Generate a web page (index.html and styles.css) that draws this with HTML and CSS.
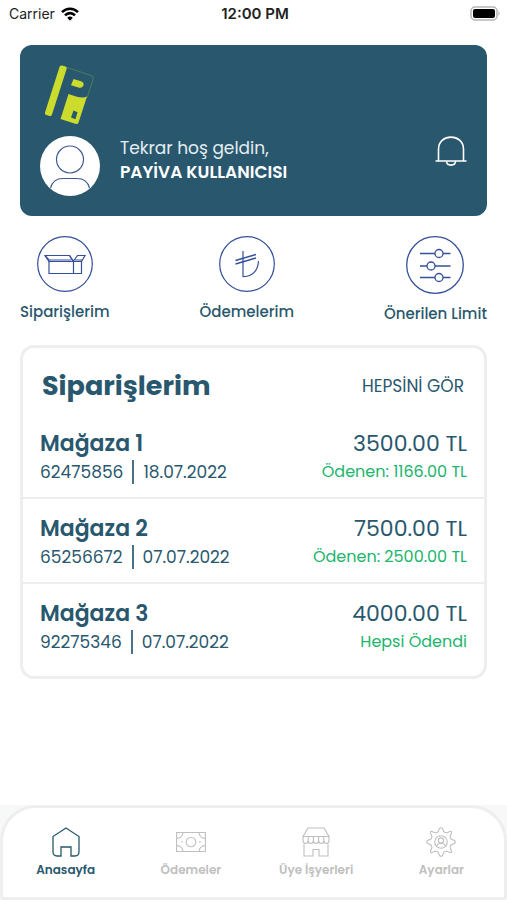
FILE: index.html
```html
<!DOCTYPE html>
<html lang="tr">
<head>
    <meta charset="UTF-8">
    <meta name="viewport" content="width=device-width, initial-scale=1.0">
    <title>Payiva</title>
    <link rel="stylesheet" href="styles.css">
</head>
<body>
    <div class="status-bar">
        <div class="carrier">
            <span>Carrier</span>
            <svg width="18" height="14" viewBox="0 0 18 14" fill="none" stroke="#000" stroke-width="2.6">
                <path d="M1 5.2C5.5 0.6 12.5 0.6 17 5.2"/>
                <path d="M4 8.3C6.8 5.4 11.2 5.4 14 8.3"/>
                <path d="M9 13.7L6.2 10.8Q9 8.3 11.8 10.8Z" fill="#000" stroke="none"/>
            </svg>
        </div>
        <div class="clock">12:00 PM</div>
        <svg class="battery" width="31" height="15" viewBox="0 0 31 15">
            <rect x="1" y="1" width="26" height="13" rx="4" fill="#fff" stroke="#b5b5b5" stroke-width="1.5"/>
            <rect x="3" y="3" width="22" height="9" rx="2" fill="#000"/>
            <path d="M28.5 5Q31 7.5 28.5 10Z" fill="#b5b5b5"/>
        </svg>
    </div>

    <main>
        <section class="welcome">
            <svg class="logo" width="50" height="60" viewBox="0 0 50 60">
                <path d="M17 .5L20.5 1.5Q22.3 2.2 21.6 4L7 49.5Q6.3 51.5 4.500 51L1.2 50Q-.6 49.3 0 47.5L14.5 2Q15.2 0 17 .5Z" fill="#cbdc2c"/>
                <path d="M22 2.5L46 10.5Q49 11.5 48.2 14L42 33" fill="none" stroke="#4c7c58" stroke-width="1"/>
                <path d="M28.5 14L36 16.2Q39.5 17.5 38.4 20.5Q37 23.5 33.5 22.5L26 20.2Z" fill="#cbdc2c"/>
                <path fill-rule="evenodd" d="M23.5 29L31 31.5Q38 33.5 42 31.5L33.5 57.5Q32.8 59.4 31 59L15.5 54ZM28.5 45.5L26 52.5L30.5 54.2L32.5 47.2Z" fill="#cbdc2c"/>
            </svg>
            <div class="profile">
                <svg class="avatar" width="60" height="60" viewBox="0 0 60 60">
                    <circle cx="30" cy="30" r="30" fill="#fff"/>
                    <g fill="none" stroke="#3e5a94" stroke-width="1.2">
                        <circle cx="30" cy="23.5" r="13.5"/>
                        <path d="M10.5 52Q13 42.5 23 42.5H37Q47 42.5 49.5 52"/>
                    </g>
                </svg>
                <div class="greeting">
                    <p>Tekrar hoş geldin,</p>
                    <p class="user-name">PAYİVA KULLANICISI</p>
                </div>
                <button class="bell" aria-label="Bildirimler">
                    <svg width="32" height="30" viewBox="0 0 32 30" fill="none" stroke="#fff" stroke-width="1.6">
                        <path d="M3.5 25V13.5C3.5 -3 28.5 -3 28.5 13.5V25"/>
                        <path d="M.5 25H31.5M11.5 25C11.5 30.5 20.5 30.5 20.5 25"/>
                    </svg>
                </button>
            </div>
        </section>

        <section class="actions">
            <a href="#siparislerim" class="action">
                <svg width="56" height="56" viewBox="0 0 56 56" fill="none" stroke="#34509a" stroke-width="1.2">
                    <circle cx="28" cy="28" r="27.3"/>
                    <path d="M12 24.5V37.5H44.5V24.5M36.5 25V37.5"/>
                    <path d="M8 19.5H32.5L36.5 25L40.5 19.5H48L44.5 25.5H12Z"/>
                    <path d="M12 24L8 19.5M32.5 19.5L36 25.5M12 24H34M38 24H45"/>
                </svg>
                <span>Siparişlerim</span>
            </a>
            <a href="#odemelerim" class="action">
                <svg width="56" height="56" viewBox="0 0 56 56" fill="none" stroke="#34509a" stroke-width="1.2">
                    <circle cx="28" cy="28" r="27.3"/>
                    <path d="M24 15V40.5C33 41 39 35 39.5 25"/>
                    <path d="M16.5 24.5L37 18.5M16.5 28L37 22" stroke-width="1.5"/>
                </svg>
                <span>Ödemelerim</span>
            </a>
            <a href="#limit" class="action">
                <svg width="58" height="58" viewBox="0 0 58 58" fill="none" stroke="#34509a" stroke-width="1.3">
                    <circle cx="29" cy="29" r="28.3"/>
                    <path d="M14 17.5H44.5M14 30H44.5M14 41.5H44.5"/>
                    <circle cx="33" cy="17.5" r="4" fill="#fff"/>
                    <circle cx="25" cy="30" r="4" fill="#fff"/>
                    <circle cx="33" cy="41.5" r="4" fill="#fff"/>
                </svg>
                <span>Önerilen Limit</span>
            </a>
        </section>

        <section class="orders" id="siparislerim">
            <div class="orders-header">
                <h1>Siparişlerim</h1>
                <a href="#hepsi">HEPSİNİ GÖR</a>
            </div>
            <div class="order">
                <div class="line">
                    <h2>Mağaza 1</h2>
                    <span class="amount">3500.00 TL</span>
                </div>
                <div class="line">
                    <span class="meta"><span>62475856</span><span>18.07.2022</span></span>
                    <span class="paid">Ödenen: 1166.00 TL</span>
                </div>
            </div>
            <div class="order">
                <div class="line">
                    <h2>Mağaza 2</h2>
                    <span class="amount">7500.00 TL</span>
                </div>
                <div class="line">
                    <span class="meta"><span>65256672</span><span>07.07.2022</span></span>
                    <span class="paid">Ödenen: 2500.00 TL</span>
                </div>
            </div>
            <div class="order">
                <div class="line">
                    <h2>Mağaza 3</h2>
                    <span class="amount">4000.00 TL</span>
                </div>
                <div class="line">
                    <span class="meta"><span>92275346</span><span>07.07.2022</span></span>
                    <span class="paid">Hepsi Ödendi</span>
                </div>
            </div>
        </section>
    </main>

    <div class="tab-area">
        <nav class="tabs">
            <a href="#anasayfa" class="active">
                <svg width="30" height="30" viewBox="0 0 30 30" fill="none" stroke="currentColor" stroke-width="1.3">
                    <path d="M15 1L28 9.5V24.5Q28 29 24 29H20V20H10V29H6Q2 29 2 24.5V9.5Z"/>
                </svg>
                <span>Anasayfa</span>
            </a>
            <a href="#odemeler">
                <svg width="30" height="30" viewBox="0 0 30 30" fill="none" stroke="currentColor" stroke-width="1.1">
                    <path d="M.6 5.5H29.4V24.5H.6Z"/>
                    <circle cx="15" cy="15" r="4.8"/>
                    <path d="M7 5.5Q6.5 11 .6 11.5M23 5.5Q23.5 11 29.4 11.5M7 24.5Q6.5 19 .6 18.5M23 24.5Q23.5 19 29.4 18.5M5 15H7M23 15H25"/>
                </svg>
                <span>Ödemeler</span>
            </a>
            <a href="#isyerleri">
                <svg width="30" height="30" viewBox="0 0 30 30" fill="none" stroke="currentColor" stroke-width="1.1">
                    <path d="M7 1H23L28 9.5H2Z"/>
                    <path d="M2 9.5V13.5C2 17.5 7.2 17.5 7.2 13.5V9.5M7.2 13.5C7.2 17.5 12.4 17.5 12.4 13.5V9.5M12.4 13.5C12.4 17.5 17.6 17.5 17.6 13.5V9.5M17.6 13.5C17.6 17.5 22.8 17.5 22.8 13.5V9.5M22.8 13.5C22.8 17.5 28 17.5 28 13.5V9.5"/>
                    <path d="M3 17V29H12V22.5H18V29H27V17"/>
                </svg>
                <span>Üye İşyerleri</span>
            </a>
            <a href="#ayarlar">
                <svg width="30" height="30" viewBox="0 0 30 30" fill="none" stroke="currentColor" stroke-width="1.1">
                    <path d="M13.5 1.5Q15 0 16.5 1.5L18 5L20.5 6L24 4.5Q26 4 25.5 6L24 9.5L25 12L28.5 13.5Q30 15 28.5 16.5L25 18L24 20.5L25.5 24Q26 26 24 25.5L20.5 24L18 25L16.5 28.5Q15 30 13.5 28.5L12 25L9.5 24L6 25.5Q4 26 4.5 24L6 20.5L5 18L1.5 16.5Q0 15 1.5 13.5L5 12L6 9.5L4.5 6Q4 4 6 4.5L9.5 6L12 5Z"/>
                    <circle cx="15" cy="15" r="6.3"/>
                    <circle cx="15" cy="13.5" r="2.6"/>
                    <path d="M10.5 19Q11 17 13.5 16.5H16.5Q19 17 19.5 19"/>
                </svg>
                <span>Ayarlar</span>
            </a>
        </nav>
    </div>
</body>
</html>
```
FILE: styles.css
```css
* {
    margin: 0;
    padding: 0;
    box-sizing: border-box;
}
body {
    display: flex;
    flex-direction: column;
    min-height: 100vh;
    background: #fff;
    color: #29586e;
    font-family: Poppins, Inter, sans-serif;
}
a {
    color: inherit;
    text-decoration: none;
}
svg {
    display: block;
    flex-shrink: 0;
}

/* Status bar */
.status-bar {
    display: grid;
    grid-template-columns: 1fr auto 1fr;
    align-items: center;
    height: 27px;
    padding: 0 6px 0 9px;
    color: #222;
    font-family: Inter, sans-serif;
    font-size: 14px;
}
.carrier {
    display: flex;
    align-items: center;
    gap: 6px;
}
.clock {
    font-size: 15px;
    font-weight: 600;
}
.battery {
    justify-self: end;
}

main {
    padding: 18px 20px 20px;
}

/* Welcome card */
.welcome {
    padding: 20px;
    border-radius: 12px;
    background: #29586e;
    color: #fff;
}
.logo {
    margin-left: 5px;
}
.profile {
    display: flex;
    align-items: center;
    margin-top: 11px;
}
.greeting {
    flex: 1;
    margin-left: 20px;
    font-size: 17px;
    line-height: 24px;
    padding-bottom: 12px;
}
.greeting p {
    color: #e4edf2;
}
.greeting .user-name {
    color: #fff;
    font-weight: 600;
}
.bell {
    border: none;
    background: none;
    margin-bottom: 30px;
    cursor: pointer;
}

/* Quick actions */
.actions {
    display: flex;
    justify-content: space-between;
    align-items: flex-start;
    margin-top: 20px;
}
.action {
    display: flex;
    flex-direction: column;
    align-items: center;
    gap: 10px;
    font-size: 15px;
    font-weight: 500;
    line-height: 20px;
}

/* Orders */
.orders {
    margin-top: 21px;
    padding-bottom: 9px;
    border: 3px solid #eee;
    border-radius: 14px;
}
.orders-header {
    display: flex;
    justify-content: space-between;
    align-items: center;
    height: 66px;
    padding: 9px 20px 0 19px;
}
.orders-header h1 {
    font-size: 27px;
    font-weight: 700;
    line-height: 36px;
}
.orders-header a {
    font-size: 17px;
}
.order {
    padding: 15px 17px 12px;
}
.order + .order {
    border-top: 2px solid #eee;
}
.line {
    display: flex;
    justify-content: space-between;
    align-items: center;
    line-height: 26px;
}
.line h2 {
    font-size: 22px;
    font-weight: 600;
    line-height: 30px;
}
.amount {
    font-size: 22px;
    line-height: 30px;
}
.meta {
    display: flex;
    align-items: center;
    font-size: 17px;
    line-height: 24px;
}
.meta span + span {
    margin-left: 9px;
    padding-left: 9px;
    border-left: 2px solid #4a7287;
}
.paid {
    color: #20b56c;
    font-size: 16px;
}

/* Bottom tabs */
.tab-area {
    margin-top: auto;
    background: #f7f8f8;
}
.tabs {
    display: grid;
    grid-template-columns: repeat(4, 1fr);
    height: 95px;
    padding-top: 19px;
    border: 3px solid #eee;
    border-radius: 36px 36px 4px 4px;
    background: #fff;
    color: #bfbfbf;
}
.tabs a {
    display: flex;
    flex-direction: column;
    align-items: center;
    gap: 4px;
    font-size: 12px;
    font-weight: 600;
    line-height: 18px;
}
.tabs .active {
    color: #29586e;
}
```
